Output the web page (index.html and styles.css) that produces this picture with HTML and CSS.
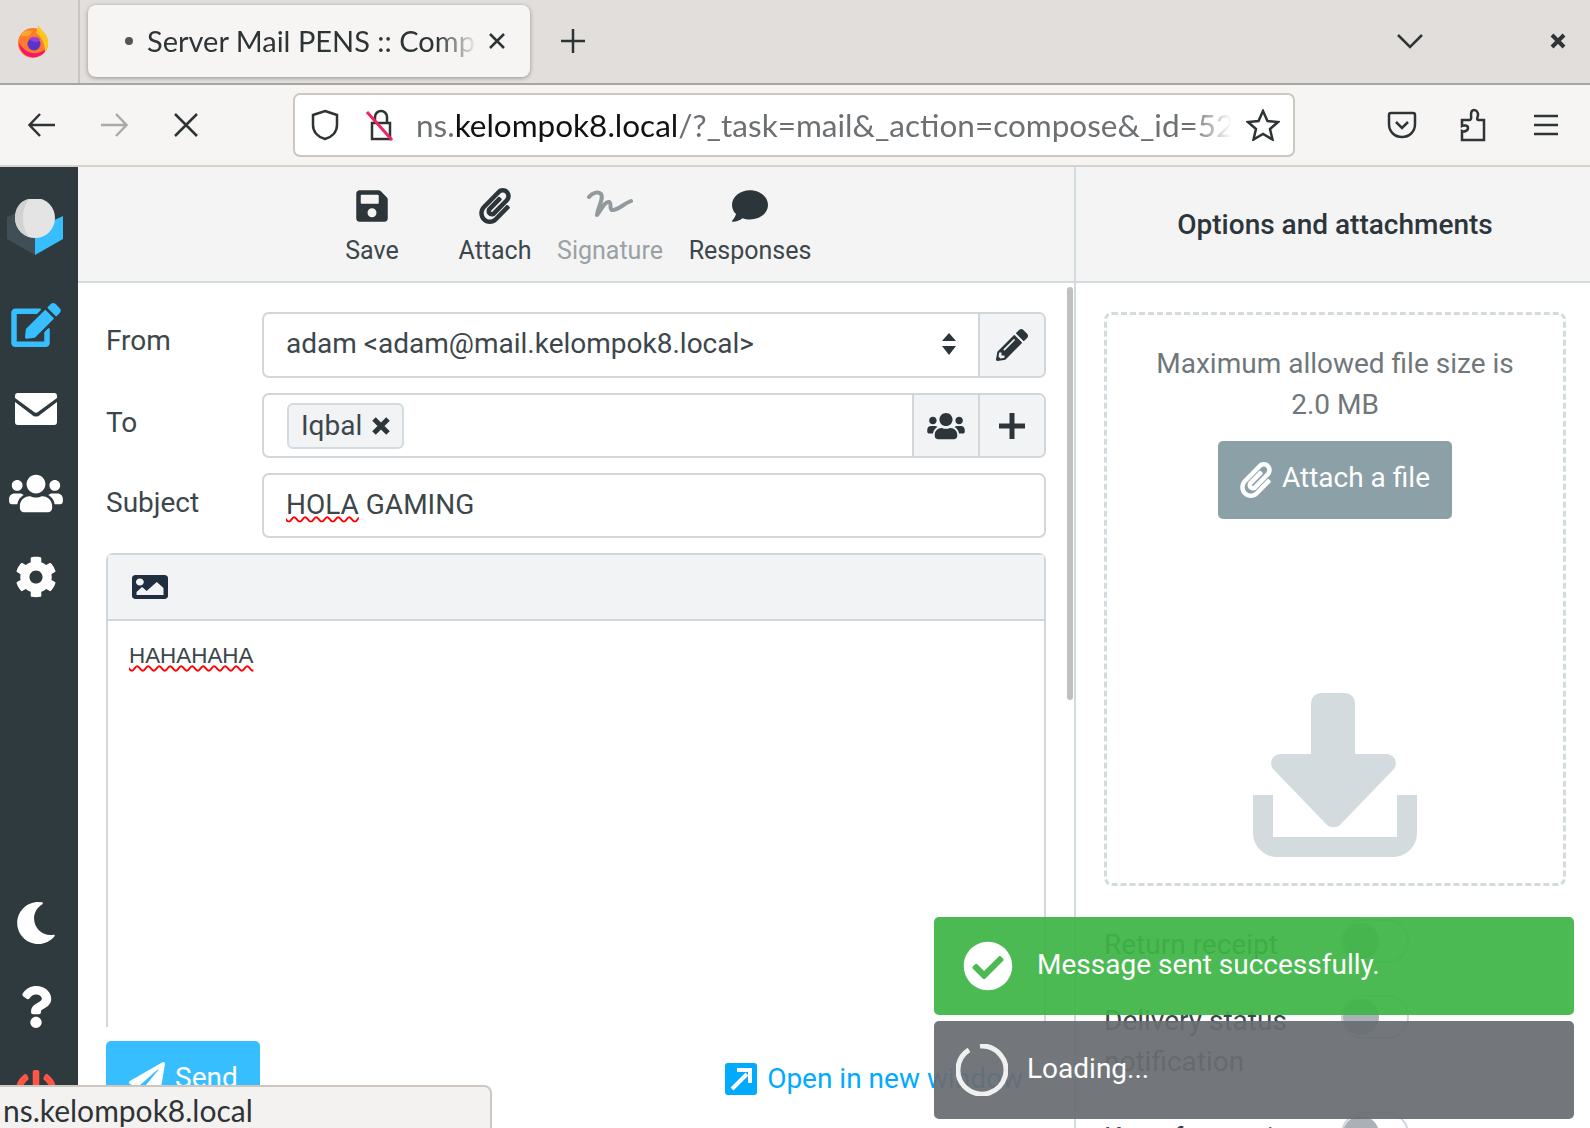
FILE: index.html
```html
<!DOCTYPE html>
<html lang="en">
<head>
  <meta charset="UTF-8">
  <title>Server Mail PENS :: Compose</title>
  <link rel="stylesheet" href="styles.css">
</head>
<body>
  <!-- browser tabs -->
  <div class="tabbar">
    <div class="fx-slot">
      <svg width="36" height="36" viewBox="0 0 36 36">
        <circle cx="17" cy="20" r="15" fill="#ff7a2b"/>
        <path d="M3 20a14.500 14.500 0 0 0 28 5c-4 4-10 6-15 5S7 26 3 20z" fill="#f5156c"/>
        <path d="M22 2c2 4 9 8 10 16 .5 5-1 8-3 11 0-8-3-15-9-19 1-3 2-5 2-8z" fill="#ffc61f"/>
        <path d="M5 12c2-4 7-6 12-4l-4 5c-3 0-6 1-8-1z" fill="#ffa52e"/>
        <circle cx="18" cy="21" r="6.500" fill="#5b33c9"/>
        <path d="M13 16c4-3 8-2 11 0-1 4-7 4-11 0z" fill="#9a3fd8"/>
      </svg>
    </div>
    <div class="tab">
      <span class="tab-dot"></span>
      <span class="tab-title">Server Mail PENS :: Compose</span>
      <svg class="tab-close" width="18" height="18" viewBox="0 0 18 18"><path d="M2 2l14 14M16 2L2 16"/></svg>
    </div>
    <svg class="new-tab" width="26" height="26" viewBox="0 0 26 26"><path d="M13 1v24M1 13h24"/></svg>
    <svg class="tab-list" width="26" height="16" viewBox="0 0 26 16"><path d="M1 2l12 12L25 2"/></svg>
    <svg class="win-close" width="16" height="16" viewBox="0 0 16 16"><path d="M2 2l12 12M14 2L2 14"/></svg>
  </div>

  <!-- browser nav -->
  <div class="navbar">
    <div class="nav-btn">
      <svg width="28" height="24" viewBox="0 0 28 24"><path d="M27 12H2M12 1L1.500 12 12 23"/></svg>
    </div>
    <div class="nav-btn nav-off">
      <svg width="28" height="24" viewBox="0 0 28 24"><path d="M1 12h25M16 1l10.500 11L16 23"/></svg>
    </div>
    <div class="nav-btn">
      <svg width="24" height="24" viewBox="0 0 24 24"><path d="M1 1l22 22M23 1L1 23"/></svg>
    </div>
    <div class="urlbar">
      <svg class="shield" width="28" height="32" viewBox="0 0 28 32"><path d="M14 2l12 4v10c0 7-5 12-12 14C7 28 2 23 2 16V6z"/></svg>
      <svg class="lock" width="30" height="32" viewBox="0 0 30 32">
        <path class="lock-body" d="M7 14h18v16H7zM10 14V8a6 6 0 0 1 12 0v6"/>
        <path class="lock-slash" d="M2 3l25 28"/>
      </svg>
      <div class="url-text"><span class="url-dim">ns.</span>kelompok8.local<span class="url-dim">/?_task=mail&amp;_action=compose&amp;_id=5201</span></div>
      <svg class="star" width="34" height="32" viewBox="0 0 34 32"><path d="M17 2l4.500 10 10.500 1-8 7 2.500 10.500L17 25l-9.500 5.500L10 20l-8-7 10.500-1z"/></svg>
    </div>
    <div class="nav-right">
      <div class="nav-btn">
        <svg width="30" height="30" viewBox="0 0 30 30"><path d="M4 3h22a2 2 0 0 1 2 2v9c0 8-6 13-13 13S2 22 2 14V5a2 2 0 0 1 2-2zM9 12l6 6 6-6"/></svg>
      </div>
      <div class="nav-btn">
        <svg width="30" height="34" viewBox="0 0 30 34"><path d="M3 32h22v-20h-6c-2-1 0-3 0-5 0-3-2-5-4-5s-3 2-3 5c0 2 1 4-1 5H3v6c2-1 6-1 6 2s-4 4-6 3z"/></svg>
      </div>
      <div class="nav-btn">
        <svg width="26" height="22" viewBox="0 0 26 22"><path d="M1 2h24M1 11h24M1 20h24"/></svg>
      </div>
    </div>
  </div>

  <div class="app">
    <!-- roundcube task menu -->
    <nav class="sidebar">
      <div class="logo">
        <svg width="60" height="60" viewBox="0 0 60 60">
          <path d="M2 18l28-12v50L2 40z" fill="#3f4f55"/>
          <path d="M30 56V30l28-13v23z" fill="#37beff"/>
          <ellipse cx="30" cy="19" rx="20" ry="20" fill="#e4e4e4"/>
          <path d="M24 0C14 2 10 10 10 19c0 10 7 16 14 19-4-5-6-12-6-19s2-14 6-19z" fill="#d2d2d2"/>
        </svg>
      </div>
      <div class="side-item side-active">
        <svg width="50" height="44" viewBox="0 0 576 512"><path d="M402.6 83.2l90.200 90.200c3.800 3.800 3.800 10 0 13.800L274.400 405.600l-92.800 10.300c-12.400 1.400-22.900-9.100-21.500-21.500l10.300-92.800L388.800 83.200c3.800-3.800 10-3.800 13.800 0zm162-22.900l-48.800-48.800c-15.200-15.200-39.900-15.200-55.200 0l-35.400 35.400c-3.800 3.800-3.800 10 0 13.800l90.200 90.200c3.800 3.800 10 3.800 13.800 0l35.400-35.400c15.200-15.300 15.200-40 0-55.200zM384 346.200V448H64V128h229.800c3.200 0 6.200-1.300 8.500-3.500l40-40c7.600-7.600 2.200-20.500-8.500-20.500H48C21.500 64 0 85.500 0 112v352c0 26.500 21.500 48 48 48h352c26.500 0 48-21.500 48-48V306.200c0-10.700-12.900-16-20.500-8.500l-40 40c-2.200 2.300-3.500 5.300-3.500 8.500z"/></svg>
      </div>
      <div class="side-item">
        <svg width="42" height="32" viewBox="0 0 44 32" preserveAspectRatio="none"><path d="M3 0h38a3 3 0 0 1 3 3v2L24 19c-1 1-3 1-4 0L0 5V3a3 3 0 0 1 3-3zM0 9l18 13c2 2 6 2 8 0L44 9v20a3 3 0 0 1-3 3H3a3 3 0 0 1-3-3z"/></svg>
      </div>
      <div class="side-item">
        <svg width="54" height="43" viewBox="0 0 640 512"><path d="M96 224c35.300 0 64-28.700 64-64s-28.700-64-64-64-64 28.700-64 64 28.700 64 64 64zm448 0c35.300 0 64-28.700 64-64s-28.700-64-64-64-64 28.700-64 64 28.700 64 64 64zm32 32h-64c-17.600 0-33.500 7.100-45.100 18.600 40.300 22.100 68.900 62 75.100 109.400h66c17.700 0 32-14.300 32-32v-32c0-35.300-28.700-64-64-64zm-256 0c61.900 0 112-50.100 112-112S381.900 32 320 32 208 82.100 208 144s50.100 112 112 112zm76.800 32h-8.300c-20.800 10-43.900 16-68.500 16s-47.600-6-68.500-16h-8.300C179.600 288 128 339.600 128 403.200V432c0 26.500 21.500 48 48 48h288c26.500 0 48-21.500 48-48v-28.800c0-63.600-51.600-115.200-115.200-115.200zm-223.700-13.400C161.500 263.100 145.600 256 128 256H64c-35.300 0-64 28.700-64 64v32c0 17.700 14.300 32 32 32h65.900c6.300-47.400 34.900-87.300 75.200-109.400z"/></svg>
      </div>
      <div class="side-item">
        <svg width="42" height="42" viewBox="0 0 512 512"><path d="M487.400 315.700l-42.600-24.600c4.300-23.200 4.300-47 0-70.200l42.600-24.600c4.900-2.800 7.100-8.600 5.500-14-11.100-35.600-30-67.800-54.700-94.600-3.800-4.100-10-5.100-14.800-2.300L380.800 110c-17.900-15.400-38.500-27.300-60.800-35.100V25.800c0-5.600-3.900-10.500-9.400-11.700-36.700-8.200-74.300-7.800-109.200 0-5.500 1.200-9.400 6.100-9.400 11.700V75c-22.200 7.900-42.800 19.800-60.800 35.100L88.700 85.500c-4.900-2.800-11-1.900-14.800 2.300-24.700 26.700-43.600 58.900-54.700 94.600-1.700 5.400.6 11.200 5.500 14L67.300 221c-4.300 23.200-4.300 47 0 70.200l-42.600 24.600c-4.900 2.800-7.100 8.600-5.500 14 11.100 35.600 30 67.800 54.700 94.600 3.800 4.100 10 5.100 14.800 2.300l42.600-24.600c17.900 15.400 38.500 27.300 60.800 35.100v49.200c0 5.600 3.900 10.500 9.400 11.700 36.700 8.200 74.300 7.800 109.200 0 5.500-1.200 9.400-6.100 9.400-11.700v-49.200c22.200-7.900 42.800-19.800 60.800-35.100l42.600 24.600c4.900 2.800 11 1.900 14.800-2.300 24.700-26.700 43.600-58.900 54.700-94.600 1.500-5.500-.7-11.300-5.600-14.100zM256 336c-44.100 0-80-35.900-80-80s35.900-80 80-80 80 35.900 80 80-35.900 80-80 80z"/></svg>
      </div>
      <div class="side-item side-first-bottom">
        <svg width="42" height="42" viewBox="0 0 512 512"><path d="M283.211 512c78.962 0 151.079-35.925 198.857-94.792 7.068-8.708-.639-21.430-11.562-19.350-124.203 23.654-238.262-71.576-238.262-196.954 0-72.222 38.662-138.635 101.498-174.394 9.686-5.512 7.250-20.197-3.756-22.230A258.156 258.156 0 0 0 283.211 0c-141.309 0-256 114.511-256 256 0 141.309 114.511 256 256 256z"/></svg>
      </div>
      <div class="side-item">
        <svg width="32" height="42" viewBox="0 0 384 512"><path d="M202.021 0C122.202 0 70.503 32.703 29.914 91.026c-7.363 10.580-5.093 25.086 5.178 32.874l43.138 32.709c10.373 7.865 25.132 6.026 33.253-4.148 25.049-31.381 43.630-49.449 82.757-49.449 30.764 0 68.816 19.799 68.816 49.631 0 22.552-18.617 34.134-48.993 51.164-35.423 19.860-82.299 44.576-82.299 106.405V320c0 13.255 10.745 24 24 24h72.471c13.255 0 24-10.745 24-24v-5.773c0-42.860 125.268-44.645 125.268-160.627C377.504 66.256 286.902 0 202.021 0zM192 373.459c-38.196 0-69.271 31.075-69.271 69.271 0 38.195 31.075 69.270 69.271 69.270s69.271-31.075 69.271-69.271-31.075-69.270-69.271-69.270z"/></svg>
      </div>
      <div class="side-item side-logout">
        <svg width="42" height="42" viewBox="0 0 512 512"><path d="M400 54.100c63 45 104 118.600 104 201.900 0 136.800-110.800 247.700-247.500 248C120 504.300 8.200 393 8 256.400 7.900 173.100 48.900 99.300 111.800 54.200c11.700-8.300 28-4.800 35 7.700L162.600 90c5.900 10.500 3.100 23.800-6.600 31-41.500 30.800-68 79.600-68 134.900-.1 92.300 74.500 168.100 168 168.100 91.600 0 168.600-74.200 168-169.100-.3-51.800-24.700-101.800-68.100-134-9.700-7.200-12.400-20.500-6.500-30.900l15.800-28.100c7-12.400 23.200-16.100 34.800-7.800zM296 264V24c0-13.300-10.700-24-24-24h-32c-13.300 0-24 10.700-24 24v240c0 13.300 10.700 24 24 24h32c13.300 0 24-10.700 24-24z"/></svg>
      </div>
    </nav>

    <!-- compose column -->
    <main class="compose">
      <div class="toolbar">
        <div class="tool tool-save">
          <svg width="32" height="36" viewBox="0 0 448 512"><path d="M433.941 129.941l-83.882-83.882A48 48 0 0 0 316.118 32H48C21.490 32 0 53.490 0 80v352c0 26.510 21.490 48 48 48h352c26.510 0 48-21.490 48-48V163.882a48 48 0 0 0-14.059-33.941zM224 416c-35.346 0-64-28.654-64-64 0-35.346 28.654-64 64-64s64 28.654 64 64c0 35.346-28.654 64-64 64zm96-304.520V212c0 6.627-5.373 12-12 12H76c-6.627 0-12-5.373-12-12V108c0-6.627 5.373-12 12-12h228.520c3.183 0 6.235 1.264 8.485 3.515l3.480 3.480A11.996 11.996 0 0 1 320 111.480z"/></svg>
          <span>Save</span>
        </div>
        <div class="tool tool-attach">
          <svg width="32" height="36" viewBox="0 0 448 512"><path d="M43.246 466.142c-58.430-60.289-57.341-157.511 1.386-217.581L254.392 34c44.316-45.332 116.351-45.336 160.671 0 43.890 44.894 43.943 117.329 0 162.276L232.214 383.128c-29.855 30.537-78.633 30.111-107.982-.998-28.275-29.970-27.368-77.473 1.452-106.953l143.743-146.835c6.182-6.314 16.312-6.422 22.626-.241l22.861 22.379c6.315 6.182 6.422 16.312.241 22.626L171.427 319.927c-4.932 5.045-5.236 13.428-.648 18.292 4.372 4.634 11.245 4.711 15.688.165l182.849-186.851c19.613-20.062 19.613-52.725-.011-72.798-19.189-19.627-49.957-19.637-69.154 0L90.390 293.295c-34.763 35.560-35.299 93.120-1.191 128.313 34.010 35.093 88.985 35.137 123.058.286l172.060-175.999c6.177-6.319 16.307-6.433 22.626-.256l22.877 22.364c6.319 6.177 6.434 16.307.256 22.626l-172.060 175.998c-59.576 60.938-155.943 60.216-214.770-.485z"/></svg>
          <span>Attach</span>
        </div>
        <div class="tool tool-sign tool-off">
          <svg width="46" height="36" viewBox="0 0 46 36"><path d="M2 9c3-4 9-6 12-3 3 4-3 13-4 21 4-5 8-14 12-13 3 1 0 7 3 8 5 1 11-6 19-9"/></svg>
          <span>Signature</span>
        </div>
        <div class="tool tool-resp">
          <svg width="36" height="36" viewBox="0 0 512 512"><path d="M256 32C114.600 32 0 125.100 0 240c0 49.600 21.400 95 57 130.700C44.500 421.100 2.700 466 2.200 466.500c-2.200 2.300-2.800 5.700-1.500 8.700S4.800 480 8 480c66.300 0 116-31.800 140.600-51.400 32.700 12.300 69 19.400 107.400 19.400 141.400 0 256-93.100 256-208S397.400 32 256 32z"/></svg>
          <span>Responses</span>
        </div>
      </div>

      <div class="form">
        <div class="scroll-thumb"></div>
        <div class="row row-from">
          <label class="row-label">From</label>
          <div class="field">
            <div class="field-main">adam &lt;adam@mail.kelompok8.local&gt;
              <svg class="sort" width="16" height="24" viewBox="0 0 16 24"><path d="M8 1l7 8H1zM8 23l7-9H1z"/></svg>
            </div>
            <div class="addon">
              <svg width="32" height="32" viewBox="0 0 512 512"><path d="M497.900 142.100l-46.100 46.100c-4.700 4.700-12.300 4.700-17 0l-111-111c-4.700-4.700-4.700-12.300 0-17l46.100-46.100c18.700-18.700 49.100-18.700 67.900 0l60.100 60.100c18.800 18.700 18.800 49.100 0 67.900zM284.200 99.800L21.600 362.400.4 483.900c-2.900 16.400 11.400 30.600 27.800 27.800l121.500-21.300 262.600-262.600c4.700-4.700 4.700-12.300 0-17l-111-111c-4.800-4.700-12.400-4.700-17.100 0zM124.100 339.900c-5.500-5.500-5.500-14.300 0-19.800l154-154c5.500-5.500 14.300-5.500 19.800 0s5.500 14.300 0 19.800l-154 154c-5.500 5.500-14.300 5.500-19.800 0zM88 424h48v36.300l-64.500 11.300-31.100-31.100L51.700 376H88v48z"/></svg>
            </div>
          </div>
        </div>
        <div class="row">
          <label class="row-label row-label-low">To</label>
          <div class="field">
            <div class="field-main field-to">
              <span class="chip">Iqbal
                <svg width="20" height="20" viewBox="0 0 20 20"><path d="M3 3l14 14M17 3L3 17"/></svg>
              </span>
            </div>
            <div class="addon">
              <svg width="38" height="30" viewBox="0 0 640 512"><path d="M96 224c35.300 0 64-28.700 64-64s-28.700-64-64-64-64 28.700-64 64 28.700 64 64 64zm448 0c35.300 0 64-28.700 64-64s-28.700-64-64-64-64 28.700-64 64 28.700 64 64 64zm32 32h-64c-17.600 0-33.500 7.100-45.100 18.600 40.300 22.100 68.900 62 75.100 109.400h66c17.700 0 32-14.300 32-32v-32c0-35.300-28.700-64-64-64zm-256 0c61.900 0 112-50.100 112-112S381.900 32 320 32 208 82.100 208 144s50.100 112 112 112zm76.800 32h-8.300c-20.800 10-43.900 16-68.500 16s-47.600-6-68.500-16h-8.300C179.600 288 128 339.600 128 403.200V432c0 26.500 21.500 48 48 48h288c26.500 0 48-21.500 48-48v-28.800c0-63.600-51.600-115.200-115.200-115.200zm-223.700-13.400C161.500 263.100 145.600 256 128 256H64c-35.300 0-64 28.700-64 64v32c0 17.700 14.300 32 32 32h65.900c6.300-47.400 34.900-87.300 75.200-109.400z"/></svg>
            </div>
            <div class="addon">
              <svg class="plus" width="28" height="28" viewBox="0 0 28 28"><path d="M14 1v26M1 14h26"/></svg>
            </div>
          </div>
        </div>
        <div class="row">
          <label class="row-label row-label-low">Subject</label>
          <div class="field">
            <div class="field-main"><span><span class="misspelt">HOLA</span> GAMING</span></div>
          </div>
        </div>

        <div class="editor">
          <div class="editor-bar">
            <svg width="36" height="32" viewBox="0 0 512 512" preserveAspectRatio="none"><path d="M464 448H48c-26.510 0-48-21.490-48-48V112c0-26.510 21.490-48 48-48h416c26.510 0 48 21.490 48 48v288c0 26.510-21.490 48-48 48zM112 120c-30.928 0-56 25.072-56 56s25.072 56 56 56 56-25.072 56-56-25.072-56-56-56zM64 384h384V272l-87.515-87.515c-4.686-4.686-12.284-4.686-16.971 0L208 320l-55.515-55.515c-4.686-4.686-12.284-4.686-16.971 0L64 336v48z"/></svg>
          </div>
          <div class="editor-body"><span class="misspelt">HAHAHAHA</span></div>
        </div>

        <div class="actions">
          <button class="send">
            <svg width="36" height="36" viewBox="0 0 512 512"><path d="M476 3.200L12.500 270.600c-18.100 10.400-15.800 35.600 2.200 43.200L121 358.400l287.300-253.200c5.500-4.900 13.300 2.600 8.600 8.300L176 407v80.500c0 23.600 28.500 32.900 42.500 15.800L282 426l124.600 52.200c14.200 6 30.400-2.900 33-18.200l72-432C515 7.800 493.300-6.800 476 3.200z"/></svg>
            <span class="lift">Send</span>
          </button>
          <a class="open-link">
            <svg width="32" height="32" viewBox="0 0 32 32"><rect width="32" height="32" rx="3" fill="#00aaff"/><path d="M7 26l15-15M12 7h13v13" stroke="#fff" stroke-width="4" fill="none"/></svg>
            Open in new window
          </a>
        </div>
      </div>
    </main>

    <!-- options column -->
    <aside class="options">
      <div class="options-head">Options and attachments</div>
      <div class="options-body">
        <div class="dropzone">
          <p class="drop-note">Maximum allowed file size is<br>2.0 MB</p>
          <button class="attach-btn">
            <svg width="32" height="36" viewBox="0 0 448 512"><path d="M43.246 466.142c-58.430-60.289-57.341-157.511 1.386-217.581L254.392 34c44.316-45.332 116.351-45.336 160.671 0 43.890 44.894 43.943 117.329 0 162.276L232.214 383.128c-29.855 30.537-78.633 30.111-107.982-.998-28.275-29.970-27.368-77.473 1.452-106.953l143.743-146.835c6.182-6.314 16.312-6.422 22.626-.241l22.861 22.379c6.315 6.182 6.422 16.312.241 22.626L171.427 319.927c-4.932 5.045-5.236 13.428-.648 18.292 4.372 4.634 11.245 4.711 15.688.165l182.849-186.851c19.613-20.062 19.613-52.725-.011-72.798-19.189-19.627-49.957-19.637-69.154 0L90.390 293.295c-34.763 35.560-35.299 93.120-1.191 128.313 34.010 35.093 88.985 35.137 123.058.286l172.060-175.999c6.177-6.319 16.307-6.433 22.626-.256l22.877 22.364c6.319 6.177 6.434 16.307.256 22.626l-172.060 175.998c-59.576 60.938-155.943 60.216-214.770-.485z"/></svg>
            <span class="lift">Attach a file</span>
          </button>
          <svg class="drop-icon" width="164" height="164" viewBox="0 0 164 164"><path d="M68 0h24a10 10 0 0 1 10 10v51h31c9 0 13 10 7 16l-53 55c-3 3-10 3-13 0L21 77c-6-6-2-16 7-16h30V10A10 10 0 0 1 68 0zM0 102h20v42h124v-42h20v38a24 24 0 0 1-24 24H24a24 24 0 0 1-24-24z"/></svg>
        </div>
        <div class="opts">
          <div class="opt-label">Return receipt</div>
          <div class="toggle"><span></span></div>
          <div class="opt-label">Delivery status notification</div>
          <div class="toggle"><span></span></div>
          <div class="opt-label">Keep formatting</div>
          <div class="toggle"><span></span></div>
        </div>
      </div>
    </aside>
  </div>

  <!-- notices -->
  <div class="toasts">
    <div class="toast toast-ok">
      <svg width="50" height="50" viewBox="0 0 512 512"><path d="M504 256c0 136.967-111.033 248-248 248S8 392.967 8 256 119.033 8 256 8s248 111.033 248 248zM227.314 387.314l184-184c6.248-6.248 6.248-16.379 0-22.627l-22.627-22.627c-6.248-6.249-16.379-6.249-22.628 0L216 308.118l-70.059-70.059c-6.248-6.248-16.379-6.248-22.628 0l-22.627 22.627c-6.248 6.248-6.248 16.379 0 22.627l104 104c6.249 6.250 16.379 6.250 22.628.001z"/></svg>
      <span class="toast-text">Message sent successfully.</span>
    </div>
    <div class="toast toast-load">
      <svg width="52" height="52" viewBox="0 0 52 52"><path d="M24 2.100A24 24 0 1 1 13 5.800"/></svg>
      <span class="toast-text">Loading...</span>
    </div>
  </div>

  <div class="status-tip">ns.kelompok8.local</div>
</body>
</html>
```

FILE: styles.css
```css
* {
  box-sizing: border-box;
}
html, body {
  margin: 0;
  width: 1590px;
  height: 1128px;
  overflow: hidden;
}
body {
  position: relative;
  display: flex;
  flex-direction: column;
  font-family: Roboto, sans-serif;
  font-size: 28px;
  color: #3c464b;
  background: #fff;
}
svg {
  display: block;
  flex: none;
}
.lift {
  padding-bottom: 5px;
}

/* browser chrome */
.tabbar {
  height: 85px;
  flex: none;
  padding-bottom: 1px;
  display: flex;
  align-items: center;
  background: #e1dedb;
  border-bottom: 2px solid #a8a4a0;
}
.fx-slot {
  width: 80px;
  height: 83px;
  padding-left: 16px;
  display: flex;
  align-items: center;
  border-right: 2px solid #c8c4c0;
}
.tab {
  width: 442px;
  height: 72px;
  margin-left: 8px;
  padding: 0 0 1px 37px;
  display: flex;
  align-items: center;
  background: #f6f5f4;
  border-radius: 8px;
  box-shadow: 0 1px 4px rgba(0, 0, 0, .35);
  font-family: Lato, sans-serif;
  font-size: 29px;
  color: #2e3436;
}
.tab-dot {
  width: 8px;
  height: 8px;
  margin-right: 14px;
  border-radius: 50%;
  background: #555;
  flex: none;
}
.tab-title {
  width: 330px;
  overflow: hidden;
  white-space: nowrap;
  -webkit-mask-image: linear-gradient(to right, #000 88%, transparent);
  mask-image: linear-gradient(to right, #000 88%, transparent);
}
.tab-close {
  margin-left: 11px;
}
.tab-close path, .new-tab path, .tab-list path, .win-close path, .navbar svg path {
  fill: none;
  stroke: #2e3436;
  stroke-width: 2.500;
}
.new-tab {
  margin-left: 30px;
}
.tab-list {
  margin-left: 811px;
}
.win-close {
  margin-left: 127px;
}
.win-close path {
  stroke-width: 4;
}
.navbar {
  height: 82px;
  flex: none;
  padding-left: 6px;
  display: flex;
  align-items: center;
  background: #f6f5f4;
  border-bottom: 2px solid #d6d2ce;
}
.nav-btn {
  width: 72px;
  display: flex;
  align-items: center;
  justify-content: center;
}
.nav-off svg path {
  stroke: #aaa;
}
.urlbar {
  width: 1002px;
  height: 64px;
  margin-left: 71px;
  padding-left: 16px;
  display: flex;
  align-items: center;
  background: #fff;
  border: 2px solid #cdc7c2;
  border-radius: 7px;
  font-family: Lato, sans-serif;
  font-size: 31.500px;
  color: #111;
}
.lock {
  margin-left: 26px;
}
.navbar .lock-slash {
  stroke: #f0235f;
  stroke-width: 3;
}
.url-text {
  width: 816px;
  margin-left: 21px;
  overflow: hidden;
  white-space: nowrap;
  -webkit-mask-image: linear-gradient(to right, #000 95%, transparent);
  mask-image: linear-gradient(to right, #000 95%, transparent);
}
.url-dim {
  color: #6d7073;
}
.star {
  margin-left: 14px;
}
.nav-right {
  margin-left: 71px;
  display: flex;
}

/* app shell */
.app {
  flex: 1;
  min-height: 0;
  display: flex;
}
.sidebar {
  width: 78px;
  flex: none;
  overflow: hidden;
  background: #2f3a3f;
}
.logo {
  height: 116px;
  padding: 32px 0 0 5px;
}
.side-item {
  height: 84px;
  padding-right: 6px;
  display: flex;
  align-items: center;
  justify-content: center;
  fill: #fff;
}
.side-active {
  fill: #37beff;
}
.side-first-bottom {
  margin-top: 262px;
}
.side-logout {
  fill: #ff5545;
}

.compose {
  width: 998px;
  flex: none;
  display: flex;
  flex-direction: column;
  border-right: 2px solid #d4dbde;
}
.toolbar {
  height: 116px;
  flex: none;
  padding-left: 221px;
  display: flex;
  background: #f4f4f4;
  border-bottom: 2px solid #d4dbde;
}
.tool {
  padding-top: 21px;
  display: flex;
  flex-direction: column;
  align-items: center;
  font-size: 25px;
  line-height: 30px;
  fill: #2c363a;
}
.tool svg {
  margin-bottom: 12px;
}
.tool-save { width: 146px; }
.tool-attach { width: 100px; }
.tool-sign { width: 130px; }
.tool-resp { width: 146px; margin-left: 2px; }
.tool-off {
  color: #9aa1a5;
}
.tool-off svg path {
  fill: none;
  stroke: #929a9d;
  stroke-width: 4;
  stroke-linecap: round;
  stroke-linejoin: round;
}

.form {
  position: relative;
  padding: 29px 28px 0 28px;
}
.scroll-thumb {
  position: absolute;
  top: 4px;
  right: 1px;
  width: 6px;
  height: 413px;
  border-radius: 3px;
  background: #c0c0c0;
}
.row {
  display: flex;
  height: 65px;
  margin-bottom: 15px;
}
.row-from {
  height: 66px;
}
.row-label {
  width: 156px;
  flex: none;
  padding-top: 11px;
  line-height: 36px;
}
.row-label-low {
  padding-top: 12px;
}
.field {
  flex: 1;
  display: flex;
  border: 2px solid #d1d6da;
  border-radius: 7px;
  overflow: hidden;
}
.field-main {
  flex: 1;
  padding: 0 0 3px 22px;
  display: flex;
  align-items: center;
  justify-content: space-between;
  color: #3c464b;
}
.field-to {
  padding-bottom: 0;
  justify-content: flex-start;
}
.sort {
  margin-right: 21px;
  fill: #2c363a;
}
.addon {
  width: 66px;
  display: flex;
  align-items: center;
  justify-content: center;
  background: #f1f3f5;
  border-left: 2px solid #d1d6da;
  fill: #2c363a;
}
.plus path {
  stroke: #2c363a;
  stroke-width: 5;
}
.chip {
  height: 46px;
  margin-left: 1px;
  padding: 0 11px 0 12px;
  display: flex;
  align-items: center;
  gap: 9px;
  background: #f1f3f5;
  border: 2px solid #d4dbde;
  border-radius: 6px;
}
.chip path {
  stroke: #2c363a;
  stroke-width: 5;
}
.misspelt {
  text-decoration: underline wavy #f00 2px;
  text-decoration-skip-ink: none;
  text-underline-offset: 2px;
}
.editor {
  height: 474px;
  border: 2px solid #d1d6da;
  border-bottom: 0;
  border-radius: 7px 7px 0 0;
}
.editor-bar {
  height: 66px;
  padding: 0 0 0 24px;
  display: flex;
  align-items: center;
  background: #f1f3f5;
  border-bottom: 2px solid #d1d6da;
  fill: #1f2f3f;
}
.editor-body {
  padding: 20px 0 0 21px;
  font-family: "Liberation Sans", sans-serif;
  font-size: 22.400px;
  line-height: 30px;
  color: #3c464b;
}
.actions {
  margin-top: 14px;
  display: flex;
  justify-content: space-between;
}
.send {
  width: 154px;
  height: 78px;
  padding: 0 0 0 23px;
  display: flex;
  align-items: center;
  gap: 10px;
  border: 0;
  border-radius: 5px;
  background: #37beff;
  color: #fff;
  font: 28px Roboto, sans-serif;
  fill: #fff;
}
.open-link {
  margin: 22px 23px 0 0;
  display: flex;
  align-items: flex-start;
  gap: 10px;
  color: #00aaff;
  line-height: 32px;
}

/* options */
.options {
  flex: 1;
  min-width: 0;
  display: flex;
  flex-direction: column;
}
.options-head {
  height: 116px;
  flex: none;
  padding: 41px 0 0 4px;
  text-align: center;
  font-weight: 500;
  line-height: 34px;
  background: #f4f4f4;
  border-bottom: 2px solid #d4dbde;
  color: #2c363a;
}
.options-body {
  padding: 29px 24px 0 28px;
}
.dropzone {
  height: 574px;
  padding-top: 28px;
  display: flex;
  flex-direction: column;
  align-items: center;
  border: 3px dashed #d4dbde;
  border-radius: 8px;
}
.drop-note {
  margin: 0 0 16px;
  text-align: center;
  line-height: 41px;
  color: #6f777b;
}
.attach-btn {
  width: 234px;
  height: 78px;
  padding: 0;
  display: flex;
  align-items: center;
  justify-content: center;
  gap: 10px;
  border: 0;
  border-radius: 5px;
  background: #8ba0a7;
  color: #fff;
  font: 28px Roboto, sans-serif;
  fill: #fff;
}
.drop-icon {
  margin-top: 174px;
  fill: #d4dbde;
}
.opts {
  margin-top: 38px;
  display: grid;
  grid-template-columns: 237px 68px;
  row-gap: 35px;
}
.opt-label {
  line-height: 41px;
  width: 210px;
}
.toggle {
  height: 44px;
  margin-top: -5px;
  border: 2px solid #ced4da;
  border-radius: 22px;
  padding-top: 2px;
}
.toggle span {
  display: block;
  width: 36px;
  height: 36px;
  border-radius: 50%;
  background: #a9b1b7;
}

/* overlays */
.toasts {
  position: absolute;
  left: 934px;
  top: 917px;
  width: 640px;
  display: flex;
  flex-direction: column;
  gap: 6px;
}
.toast {
  height: 98px;
  display: flex;
  align-items: center;
  border-radius: 5px;
  color: #fff;
  fill: #fff;
}
.toast-text {
  padding-bottom: 3px;
}
.toast-ok {
  padding-left: 29px;
  gap: 24px;
  background: rgba(62, 181, 69, .93);
}
.toast-load {
  padding-left: 22px;
  gap: 19px;
  background: rgba(104, 109, 113, .93);
}
.toast-load path {
  fill: none;
  stroke: #f0f0f0;
  stroke-width: 5;
}
.status-tip {
  position: absolute;
  left: 0;
  top: 1085px;
  width: 492px;
  height: 60px;
  padding: 5px 0 0 3px;
  background: #f4f2f0;
  border: 2px solid #cdc7c2;
  border-left: 0;
  border-top-right-radius: 8px;
  font-family: Lato, sans-serif;
  font-size: 30px;
  line-height: 36px;
  color: #2e3436;
}
```
